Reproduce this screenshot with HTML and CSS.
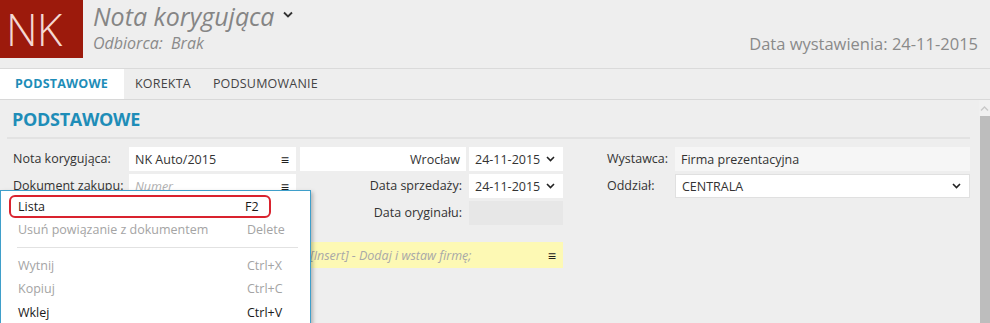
FILE: index.html
```html
<!DOCTYPE html>
<html lang="pl">
<head>
<meta charset="utf-8">
<title>Nota korygująca</title>
<link rel="stylesheet" href="styles.css">
</head>
<body>
<div class="app">
  <header class="top">
    <div class="logo">NK</div>
    <div class="titles">
      <div class="title">Nota korygująca <svg class="chev" width="10" height="7" viewBox="0 0 10 7"><path d="M1 1.5 L5 5.5 L9 1.5" fill="none" stroke="#333" stroke-width="1.8"/></svg></div>
      <div class="subtitle">Odbiorca:&nbsp; Brak</div>
    </div>
    <div class="issued">Data wystawienia: 24-11-2015</div>
  </header>
  <nav class="tabs">
    <div class="tab active">PODSTAWOWE</div>
    <div class="tab">KOREKTA</div>
    <div class="tab">PODSUMOWANIE</div>
  </nav>
  <div class="body">
    <main class="content">
      <h2 class="section">PODSTAWOWE</h2>
      <div class="form">
        <div class="row">
          <div class="lbl">Nota korygująca:</div>
          <div class="field w1 white"><span>NK Auto/2015</span><span class="burger">≡</span></div>
          <div class="field w2 white right"><span>Wrocław</span></div>
          <div class="field w3 white"><span>24-11-2015</span><svg class="dd" width="9" height="6" viewBox="0 0 9 6"><path d="M1 1 L4.5 4.5 L8 1" fill="none" stroke="#222" stroke-width="1.6"/></svg></div>
          <div class="lbl2">Wystawca:</div>
          <div class="field w4 light"><span>Firma prezentacyjna</span></div>
        </div>
        <div class="row">
          <div class="lbl">Dokument zakupu:</div>
          <div class="field w1 white"><span class="ph">Numer</span><span class="burger">≡</span></div>
          <div class="lblr w2">Data sprzedaży:</div>
          <div class="field w3 white"><span>24-11-2015</span><svg class="dd" width="9" height="6" viewBox="0 0 9 6"><path d="M1 1 L4.5 4.5 L8 1" fill="none" stroke="#222" stroke-width="1.6"/></svg></div>
          <div class="lbl2">Oddział:</div>
          <div class="field w4 white bordered"><span>CENTRALA</span><svg class="dd" width="9" height="6" viewBox="0 0 9 6"><path d="M1 1 L4.5 4.5 L8 1" fill="none" stroke="#222" stroke-width="1.6"/></svg></div>
        </div>
        <div class="row">
          <div class="lbl"></div>
          <div class="spacer w1"></div>
          <div class="lblr w2">Data oryginału:</div>
          <div class="field w3 dim"></div>
        </div>
        <div class="row row4">
          <div class="lbl"></div>
          <div class="spacer w1"></div>
          <div class="field wy yellow"><span class="ph2">[Insert] - Dodaj i wstaw firmę;</span><span class="burger">≡</span></div>
        </div>
      </div>
    </main>
    <div class="scrollbar">
      <div class="sb-up"><svg width="9" height="5" viewBox="0 0 9 5"><path d="M1 4.5 L4.5 1 L8 4.5" fill="none" stroke="#c8c8c8" stroke-width="1.4"/></svg></div>
      <div class="sb-thumb"></div>
    </div>
  </div>
  <div class="menu">
    <div class="mi hl"><span>Lista</span><span class="sc">F2</span></div>
    <div class="mi dis"><span>Usuń powiązanie z dokumentem</span><span class="sc">Delete</span></div>
    <div class="sep"></div>
    <div class="mi dis"><span>Wytnij</span><span class="sc">Ctrl+X</span></div>
    <div class="mi dis"><span>Kopiuj</span><span class="sc">Ctrl+C</span></div>
    <div class="mi"><span>Wklej</span><span class="sc">Ctrl+V</span></div>
  </div>
</div>
</body>
</html>
```
FILE: styles.css
```css
* { box-sizing: border-box; }
html, body { margin: 0; padding: 0; }
body {
  width: 990px;
  height: 323px;
  overflow: hidden;
  background: #eeeeee;
  font-family: "Open Sans", "Noto Sans", sans-serif;
  font-size: 12.5px;
  color: #333;
}
.app { position: relative; width: 990px; height: 323px; }

.top {
  display: flex;
  align-items: flex-start;
  height: 69px;
  border-bottom: 1px solid #dadada;
}
.logo {
  width: 83px;
  height: 58px;
  background: #9c1a0c;
  color: #f4d8d2;
  font-size: 44px;
  font-weight: 300;
  line-height: 58px;
  padding-left: 6px;
  letter-spacing: -1px;
}
.titles { margin-left: 10px; flex: 1; }
.title {
  font-style: italic;
  font-size: 25px;
  color: #858585;
  line-height: 32px;
  display: flex;
  align-items: center;
}
.chev { margin-left: 8px; margin-top: -4px; }
.subtitle {
  font-style: italic;
  font-size: 16px;
  color: #8a8a8a;
  line-height: 22px;
}
.issued {
  font-size: 16.5px;
  color: #8a8a8a;
  margin-top: 33px;
  margin-right: 12px;
  line-height: 22px;
}

.tabs {
  display: flex;
  height: 31px;
  border-bottom: 1px solid #d8d8d8;
}
.tab {
  font-size: 12.5px;
  color: #444;
  padding: 0 11px;
  line-height: 30px;
  letter-spacing: 0.2px;
}
.tab.active {
  background: #ffffff;
  color: #1e8db8;
  font-weight: 700;
  padding: 0 15px 0 15px;
  width: 124px;
}

.body { display: flex; height: 223px; }
.content { flex: 1; padding: 6px 9px 0 7px; }
.section {
  margin: 0;
  font-size: 18px;
  font-weight: 700;
  color: #1e8db8;
  line-height: 26px;
  padding-left: 5px;
  padding-bottom: 5px;
  border-bottom: 2px solid #e2e2e2;
  letter-spacing: -0.3px;
}
.form { padding-top: 8px; padding-left: 6px; }
.row { display: flex; height: 24px; margin-bottom: 3px; align-items: stretch; }
.row4 { margin-top: 17px; height: 26px; }
.lbl { width: 116px; line-height: 24px; white-space: nowrap; }
.field {
  display: flex;
  align-items: center;
  padding: 0 6px;
  white-space: nowrap;
  overflow: hidden;
}
.field span:first-child { flex: 1; }
.w1 { width: 167px; margin-right: 4px; }
.w2 { width: 166px; margin-right: 3px; }
.w3 { width: 94px; }
.w4 { width: 295px; }
.wy { width: 263px; }
.white { background: #ffffff; }
.light { background: #f6f6f6; }
.dim { background: #e7e7e7; }
.yellow { background: #fdf9b4; }
.bordered { border: 1px solid #e0e0e0; }
.right { justify-content: flex-end; }
.right span:first-child { flex: none; }
.burger { font-size: 14px; color: #222; margin-right: 1px; font-weight: 600; }
.dd { margin-left: 4px; margin-right: 2px; }
.ph { color: #b0b0b0; font-style: italic; }
.ph2 { color: #a8a8a8; font-style: italic; padding-left: 4px; }
.lblr { line-height: 24px; text-align: right; padding-right: 4px; white-space: nowrap; }
.lbl2 { width: 68px; margin-left: 44px; line-height: 24px; }

.scrollbar { width: 13px; display: flex; flex-direction: column; }
.sb-up { height: 16px; display: flex; align-items: center; justify-content: center; background: #f0f0f0; }
.sb-thumb { flex: 1; background: #bdbdbd; margin-left: 1px; }

.menu {
  position: absolute;
  left: 0;
  top: 190px;
  width: 311px;
  height: 140px;
  background: #ffffff;
  border: 1px solid #3f9fca;
  box-shadow: 2px 2px 4px rgba(0,0,0,0.25);
  padding: 4px 13px 0 8px;
  font-size: 12.5px;
}
.mi {
  display: flex;
  height: 23.5px;
  align-items: center;
  padding-left: 9px;
  color: #1a1a1a;
  width: 276px;
}
.mi span:first-child { flex: 1; }
.mi .sc { width: 38px; }
.mi.hl {
  border: 2px solid #d9232e;
  border-radius: 6px;
  width: 262px;
  height: 23px;
  padding-left: 7px;
}
.mi.hl .sc { width: 24px; }
.mi.dis { color: #a4a4a4; }
.sep { height: 1px; background: #e2e2e2; margin: 5px 0 6px 8px; width: 281px; }
```
